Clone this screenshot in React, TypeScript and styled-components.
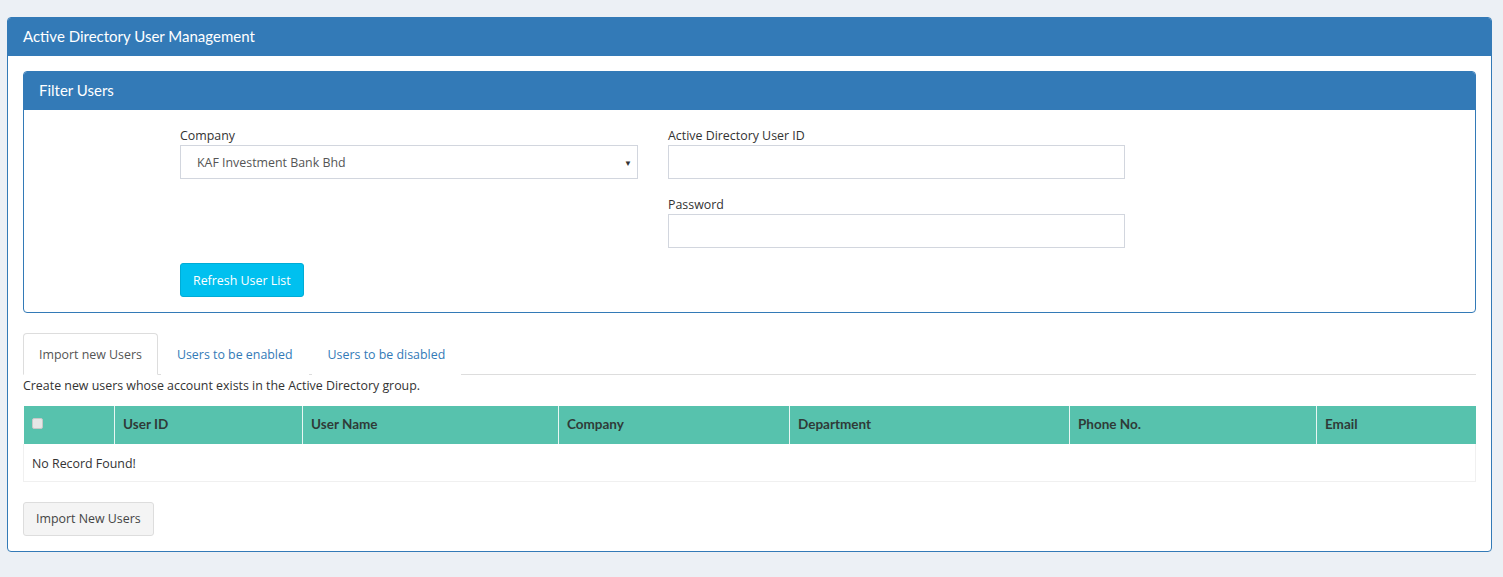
import React, { useState } from 'react';
import styled, { createGlobalStyle } from 'styled-components';

const GlobalStyle = createGlobalStyle`
  html, body {
    margin: 0;
    padding: 0;
    background: #ecf0f5;
    font-family: 'Open Sans', 'Liberation Sans', sans-serif;
    font-size: 12.4px;
    color: #333;
  }
  * {
    box-sizing: border-box;
  }
`;

const columns = [
  { key: 'check', label: '', width: 91 },
  { key: 'userId', label: 'User ID', width: 188 },
  { key: 'userName', label: 'User Name', width: 256 },
  { key: 'company', label: 'Company', width: 231 },
  { key: 'department', label: 'Department', width: 280 },
  { key: 'phone', label: 'Phone No.', width: 247 },
  { key: 'email', label: 'Email', width: 159 },
];

const tabs = ['Import new Users', 'Users to be enabled', 'Users to be disabled'];

export default function App() {
  const [activeTab, setActiveTab] = useState(0);

  return (
    <>
      <GlobalStyle />
      <Page>
        <Panel>
          <PanelHeading>Active Directory User Management</PanelHeading>
          <PanelBody>
            <Panel>
              <PanelHeading>Filter Users</PanelHeading>
              <FilterBody>
                <FilterGrid>
                  <FormGroup>
                    <Label>Company</Label>
                    <SelectBox>
                      <span>KAF Investment Bank Bhd</span>
                      <Caret>▼</Caret>
                    </SelectBox>
                  </FormGroup>
                  <FormGroup>
                    <Label>Active Directory User ID</Label>
                    <Input type="text" />
                  </FormGroup>
                  <div />
                  <FormGroup>
                    <Label>Password</Label>
                    <Input type="password" />
                  </FormGroup>
                  <div>
                    <Button variant="info">Refresh User List</Button>
                  </div>
                </FilterGrid>
              </FilterBody>
            </Panel>

            <TabList>
              {tabs.map((tab, i) => (
                <Tab key={tab} active={i === activeTab} onClick={() => setActiveTab(i)}>
                  {tab}
                </Tab>
              ))}
            </TabList>
            <Description>
              Create new users whose account exists in the Active Directory group.
            </Description>

            <Table>
              <colgroup>
                {columns.map((c) => (
                  <col key={c.key} style={{ width: c.width }} />
                ))}
              </colgroup>
              <thead>
                <tr>
                  {columns.map((c) => (
                    <Th key={c.key}>{c.key === 'check' ? <CheckBox /> : c.label}</Th>
                  ))}
                </tr>
              </thead>
              <tbody>
                <tr>
                  <Td colSpan={columns.length}>No Record Found!</Td>
                </tr>
              </tbody>
            </Table>

            <Button variant="default">Import New Users</Button>
          </PanelBody>
        </Panel>
      </Page>
    </>
  );
}

const Page = styled.div`
  padding: 17px 11px 26px 7px;
`;

const Panel = styled.div`
  background: #fff;
  border: 1px solid #337ab7;
  border-radius: 4px;
  overflow: hidden;
`;

const PanelHeading = styled.div`
  background: #337ab7;
  color: #fff;
  font-family: 'Lato', 'Liberation Sans', sans-serif;
  font-size: 15px;
  height: 38px;
  line-height: 37px;
  padding: 0 15px;
`;

const PanelBody = styled.div`
  padding: 15px;
`;

const FilterBody = styled.div`
  padding: 15px 0 15px 156px;
`;

const FilterGrid = styled.div`
  display: grid;
  grid-template-columns: 458px 457px;
  column-gap: 30px;
`;

const FormGroup = styled.div`
  display: flex;
  flex-direction: column;
  margin-bottom: 15px;
`;

const Label = styled.label`
  display: block;
  line-height: 18px;
  padding-top: 2px;
  color: #333;
`;

const Input = styled.input`
  height: 34px;
  border: 1px solid #d2d6de;
  padding: 6px 12px;
  font: inherit;
  outline: none;
`;

const SelectBox = styled.div`
  height: 34px;
  border: 1px solid #d2d6de;
  padding: 0 5px 0 16px;
  display: flex;
  align-items: center;
  justify-content: space-between;
  color: #555;
`;

const Caret = styled.span`
  font-size: 8px;
  color: #333;
`;

const Button = styled.button<{ variant: 'info' | 'default' }>`
  height: 34px;
  padding: 0 12px;
  font: inherit;
  border-radius: 3px;
  cursor: pointer;
  border: 1px solid ${(p) => (p.variant === 'info' ? '#00acd6' : '#ddd')};
  background: ${(p) => (p.variant === 'info' ? '#00c0ef' : '#f4f4f4')};
  color: ${(p) => (p.variant === 'info' ? '#fff' : '#444')};
`;

const TabList = styled.div`
  display: flex;
  margin-top: 20px;
  border-bottom: 1px solid #ddd;
`;

const Tab = styled.div<{ active: boolean }>`
  padding: 11px 15px 9px 15px;
  margin-right: 3px;
  line-height: 20px;
  margin-bottom: -1px;
  border: 1px solid ${(p) => (p.active ? '#ddd' : 'transparent')};
  border-bottom-color: ${(p) => (p.active ? '#fff' : 'transparent')};
  border-radius: 4px 4px 0 0;
  background: #fff;
  color: ${(p) => (p.active ? '#555' : '#337ab7')};
  cursor: pointer;
`;

const Description = styled.p`
  margin: 2px 0 11px;
  line-height: 18px;
`;

const Table = styled.table`
  width: 100%;
  table-layout: fixed;
  border-collapse: collapse;
  margin-bottom: 20px;
`;

const Th = styled.th`
  background: #57c2ad;
  height: 38px;
  padding: 0 8px 2px;
  text-align: left;
  font-family: 'Lato', 'Liberation Sans', sans-serif;
  font-size: 13.5px;
  font-weight: 700;
  color: #2f3b38;
  border-left: 1px solid #e8f6f3;
  &:first-child {
    border-left: none;
  }
`;

const CheckBox = styled.span`
  display: inline-block;
  width: 11px;
  height: 11px;
  margin-top: 2px;
  border: 1px solid #c8c8c8;
  background: #e6e6e6;
  border-radius: 2px;
`;

const Td = styled.td`
  height: 37px;
  padding: 2px 8px 0;
  border: 1px solid #f0f0f0;
  border-top: none;
`;
